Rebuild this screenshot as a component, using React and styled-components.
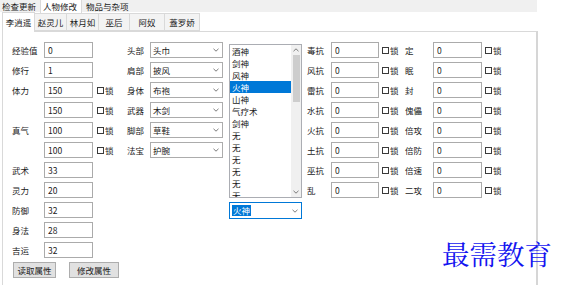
import React from 'react';
import styled, { createGlobalStyle } from 'styled-components';

const Global = createGlobalStyle`
  html, body { margin: 0; padding: 0; background: #fff; }
  body {
    font-family: "Noto Sans CJK SC", "Noto Sans", sans-serif;
    font-size: 8.5px;
    color: #1a1a1a;
  }
  * { box-sizing: border-box; }
`;

const Window = styled.div`
  position: relative;
  width: 565px;
  height: 285px;
  overflow: hidden;
  background: #fff;
`;

const TopBar = styled.div`
  display: flex;
  align-items: flex-start;
  width: 537px;
  height: 12px;
  background: #f0f0f0;
`;

const TopTab = styled.div`
  width: ${(p) => p.$w}px;
  height: ${(p) => (p.$active ? 13 : 12)}px;
  padding-left: ${(p) => p.$pl}px;
  display: flex;
  align-items: center;
  white-space: nowrap;
  line-height: 1;
  background: ${(p) => (p.$active ? '#fff' : 'transparent')};
  border-left: ${(p) => (p.$active ? '1px solid #dadada' : 'none')};
  border-right: ${(p) => (p.$active ? '1px solid #dadada' : 'none')};
`;

const SubArea = styled.div`
  padding-left: 2px;
`;

const SubStrip = styled.div`
  display: flex;
  align-items: flex-end;
  height: 19px;
`;

const SubTab = styled.div`
  position: relative;
  z-index: ${(p) => (p.$active ? 2 : 1)};
  width: ${(p) => p.$w}px;
  height: ${(p) => (p.$active ? 20 : 18)}px;
  margin-bottom: ${(p) => (p.$active ? -1 : 0)}px;
  display: flex;
  align-items: center;
  justify-content: center;
  white-space: nowrap;
  line-height: 1;
  background: ${(p) => (p.$active ? '#fff' : '#f3f3f3')};
  border: 1px solid #d9d9d9;
  border-bottom: ${(p) => (p.$active ? 'none' : '1px solid #d9d9d9')};
  margin-left: -1px;
  &:first-child { margin-left: 0; }
`;

const Panel = styled.div`
  width: 536px;
  height: 262px;
  border: 1px solid #d9d9d9;
  border-right: 2px solid #d6d6d6;
  padding: 10px 0 0 9px;
`;

const Grid = styled.div`
  display: grid;
  grid-template-columns: 32px 49px 30px 27px 73px 79px 29px 48px 23px 31px 49px 28px;
  grid-template-rows: repeat(12, 16px);
  row-gap: 4px;
`;

const Label = styled.div`
  grid-row: ${(p) => p.$r};
  grid-column: ${(p) => p.$c};
  padding-left: ${(p) => p.$pl || 0}px;
  display: flex;
  align-items: center;
  white-space: nowrap;
  line-height: 1;
`;

const Field = styled.input`
  grid-row: ${(p) => p.$r};
  grid-column: ${(p) => p.$c};
  width: 100%;
  height: 16px;
  margin: 0;
  border: 1px solid #ababab;
  background: #fff;
  padding: 0 3px;
  font: inherit;
  color: #1a1a1a;
  outline: none;
`;

const Check = styled.div`
  grid-row: ${(p) => p.$r};
  grid-column: ${(p) => p.$c};
  padding-left: ${(p) => p.$pl}px;
  display: flex;
  align-items: center;
  gap: 1px;
  line-height: 1;
  white-space: nowrap;
`;

const Box = styled.span`
  display: block;
  width: 7px;
  height: 7px;
  border: 1px solid #3a3a3a;
  background: #fff;
`;

const Select = styled.div`
  grid-row: ${(p) => p.$r};
  grid-column: ${(p) => p.$c};
  height: ${(p) => (p.$focus ? 17 : 16)}px;
  border: 1px solid ${(p) => (p.$focus ? '#0078d7' : '#acacac')};
  background: #fff;
  display: flex;
  align-items: center;
  justify-content: space-between;
  padding: 0 3px 0 2px;
  line-height: 1;
`;

const SelectWrap = styled.div`
  grid-row: ${(p) => p.$r};
  grid-column: ${(p) => p.$c};
  display: flex;
  justify-content: flex-end;
`;

const ComboBox = styled(Select)`
  width: 73px;
  padding-left: 2px;
`;

const Highlight = styled.span`
  background: #0078d7;
  color: #fff;
  padding: 1px 1px;
`;

const Chevron = () => (
  <svg width="6" height="4" viewBox="0 0 6 4">
    <path d="M0.5 0.8 L3 3.2 L5.5 0.8" fill="none" stroke="#6d6d6d" strokeWidth="0.9" />
  </svg>
);

const ChevronUp = () => (
  <svg width="6" height="4" viewBox="0 0 6 4">
    <path d="M0.5 3.2 L3 0.8 L5.5 3.2" fill="none" stroke="#6d6d6d" strokeWidth="0.9" />
  </svg>
);

const ListWrap = styled.div`
  grid-row: 1 / 9;
  grid-column: 6;
  display: flex;
  justify-content: flex-end;
  align-items: flex-end;
`;

const ListBox = styled.div`
  width: 73px;
  height: 154px;
  border: 1px solid #abadb3;
  background: #fff;
  display: flex;
  overflow: hidden;
`;

const Items = styled.div`
  flex: 1;
  overflow: hidden;
`;

const Item = styled.div`
  height: 12px;
  padding-left: 2px;
  display: flex;
  align-items: center;
  line-height: 1;
  white-space: nowrap;
  background: ${(p) => (p.$sel ? '#0078d7' : 'transparent')};
  color: ${(p) => (p.$sel ? '#fff' : '#1a1a1a')};
`;

const ScrollBar = styled.div`
  width: 10px;
  background: #f0f0f0;
  display: flex;
  flex-direction: column;
`;

const ScrollArrow = styled.div`
  height: 10px;
  display: flex;
  align-items: center;
  justify-content: center;
`;

const Track = styled.div`
  flex: 1;
  display: flex;
  justify-content: center;
`;

const Thumb = styled.div`
  width: 7px;
  height: 47px;
  background: #cdcdcd;
`;

const BtnRow = styled.div`
  grid-row: 12;
  grid-column: 1 / 5;
  display: flex;
  gap: 13px;
  padding-left: 1px;
`;

const Btn = styled.div`
  width: ${(p) => p.$w}px;
  height: 16px;
  border: 1px solid #adadad;
  background: #e1e1e1;
  display: flex;
  align-items: center;
  justify-content: center;
  line-height: 1;
  white-space: nowrap;
`;

const Watermark = styled.div`
  position: absolute;
  left: 442px;
  top: 239px;
  font-family: "Noto Serif CJK SC", "AR PL UKai CN", "AR PL UMing CN", "Noto Sans CJK SC", serif;
  font-size: 27.5px;
  line-height: 28px;
  color: #1414f0;
  white-space: nowrap;
`;

const leftRows = [
  { label: '经验值', value: '0' },
  { label: '修行', value: '1' },
  { label: '体力', value: '150', lock: true },
  { label: '', value: '150', lock: true },
  { label: '真气', value: '100', lock: true },
  { label: '', value: '100', lock: true },
  { label: '武术', value: '33' },
  { label: '灵力', value: '20' },
  { label: '防御', value: '32' },
  { label: '身法', value: '28' },
  { label: '吉运', value: '32' },
];

const equip = [
  ['头部', '头巾'],
  ['肩部', '披风'],
  ['身体', '布袍'],
  ['武器', '木剑'],
  ['脚部', '草鞋'],
  ['法宝', '护腕'],
];

const listItems = ['酒神', '剑神', '风神', '火神', '山神', '气疗术', '剑神', '无', '无', '无', '无', '无', '无'];

const resist = [
  ['毒抗', '定'],
  ['风抗', '眠'],
  ['雷抗', '封'],
  ['水抗', '傀儡'],
  ['火抗', '倍攻'],
  ['土抗', '倍防'],
  ['巫抗', '倍速'],
  ['乱', '二攻'],
];

const subTabs = [
  ['李逍遥', 33],
  ['赵灵儿', 33],
  ['林月如', 33],
  ['巫后', 32],
  ['阿奴', 36],
  ['蓋罗娇', 36],
];

export default function App() {
  return (
    <Window>
      <Global />
      <TopBar>
        <TopTab $w={40} $pl={2}>检查更新</TopTab>
        <TopTab $w={42} $pl={2} $active>人物修改</TopTab>
        <TopTab $w={48} $pl={4}>物品与杂项</TopTab>
      </TopBar>
      <SubArea>
        <SubStrip>
          {subTabs.map(([t, w], i) => (
            <SubTab key={t} $w={w} $active={i === 0}>{t}</SubTab>
          ))}
        </SubStrip>
        <Panel>
          <Grid>
            {leftRows.map((r, i) => (
              <React.Fragment key={'l' + i}>
                {r.label && <Label $r={i + 1} $c={1}>{r.label}</Label>}
                <Field $r={i + 1} $c={2} readOnly value={r.value} />
                {r.lock && (
                  <Check $r={i + 1} $c={3} $pl={4}><Box />锁</Check>
                )}
              </React.Fragment>
            ))}
            {equip.map(([l, v], i) => (
              <React.Fragment key={'e' + i}>
                <Label $r={i + 1} $c={4} $pl={4}>{l}</Label>
                <Select $r={i + 1} $c={5}>
                  <span>{v}</span>
                  <Chevron />
                </Select>
              </React.Fragment>
            ))}
            <ListWrap>
              <ListBox>
                <Items>
                  {listItems.map((t, i) => (
                    <Item key={i} $sel={i === 3}>{t}</Item>
                  ))}
                </Items>
                <ScrollBar>
                  <ScrollArrow><ChevronUp /></ScrollArrow>
                  <Track><Thumb /></Track>
                  <ScrollArrow><Chevron /></ScrollArrow>
                </ScrollBar>
              </ListBox>
            </ListWrap>
            <SelectWrap $r={9} $c={6}>
              <ComboBox $focus>
                <Highlight>火神</Highlight>
                <Chevron />
              </ComboBox>
            </SelectWrap>
            {resist.map(([a, b], i) => (
              <React.Fragment key={'r' + i}>
                <Label $r={i + 1} $c={7} $pl={5}>{a}</Label>
                <Field $r={i + 1} $c={8} readOnly value="0" />
                <Check $r={i + 1} $c={9} $pl={3}><Box />锁</Check>
                <Label $r={i + 1} $c={10} $pl={3}>{b}</Label>
                <Field $r={i + 1} $c={11} readOnly value="0" />
                <Check $r={i + 1} $c={12} $pl={3}><Box />锁</Check>
              </React.Fragment>
            ))}
            <BtnRow>
              <Btn $w={43}>读取属性</Btn>
              <Btn $w={50}>修改属性</Btn>
            </BtnRow>
          </Grid>
        </Panel>
      </SubArea>
      <Watermark>最需教育</Watermark>
    </Window>
  );
}
